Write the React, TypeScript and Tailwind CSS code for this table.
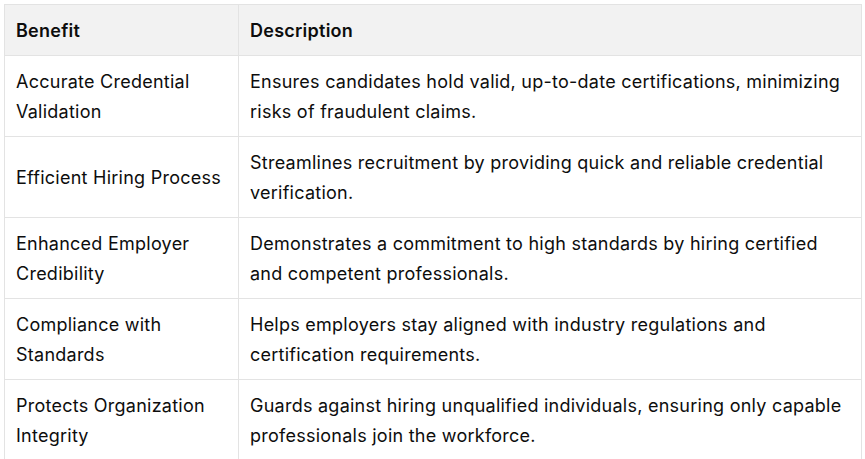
import React from "react";

const rows: [string, string][] = [
  ["Accurate Credential Validation", "Ensures candidates hold valid, up-to-date certifications, minimizing risks of fraudulent claims."],
  ["Efficient Hiring Process", "Streamlines recruitment by providing quick and reliable credential verification."],
  ["Enhanced Employer Credibility", "Demonstrates a commitment to high standards by hiring certified and competent professionals."],
  ["Compliance with Standards", "Helps employers stay aligned with industry regulations and certification requirements."],
  ["Protects Organization Integrity", "Guards against hiring unqualified individuals, ensuring only capable professionals join the workforce."],
];

export default function App() {
  return (
    <div className="bg-white w-[865px] h-[459px] overflow-hidden pt-[4px] pl-[4px]" style={{ fontFamily: "Inter, 'Noto Sans', sans-serif" }}>
      <table className="w-[858px] border-collapse table-fixed text-[18px] leading-[30px] tracking-[0.25px] text-[#0d0d0d]">
        <colgroup>
          <col className="w-[234px]" />
          <col />
        </colgroup>
        <thead>
          <tr className="bg-[#f2f2f2]">
            <th className="border border-[#e3e3e3] text-left font-semibold px-[11px] pt-[11px] pb-[9px]">Benefit</th>
            <th className="border border-[#e3e3e3] text-left font-semibold px-[11px] pt-[11px] pb-[9px]">Description</th>
          </tr>
        </thead>
        <tbody>
          {rows.map(([a, b]) => (
            <tr key={a}>
              <td className="border border-[#e3e3e3] px-[11px] pt-[11px] pb-[9px] align-middle h-[81px]">{a}</td>
              <td className="border border-[#e3e3e3] px-[11px] pt-[11px] pb-[9px] align-middle h-[81px]">{b}</td>
            </tr>
          ))}
        </tbody>
      </table>
    </div>
  );
}
